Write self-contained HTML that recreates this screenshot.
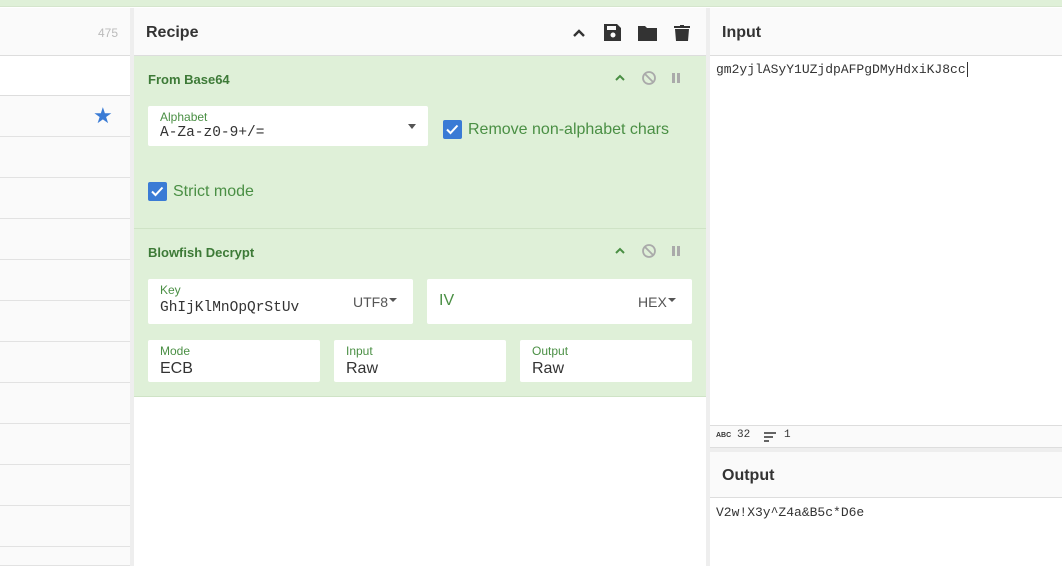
<!DOCTYPE html>
<html><head><style>
*{box-sizing:border-box;margin:0;padding:0}
html,body{width:1062px;height:566px;overflow:hidden}
body{font-family:"Liberation Sans",sans-serif;background:#fff;position:relative}
.abs{position:absolute}
.mono{font-family:"Liberation Mono",monospace}
.hdr{font-weight:bold;font-size:16px;color:#333}
.op{background:#dff0d8;border-bottom:1px solid #cfe3c6}
.optitle{font-weight:bold;font-size:13px;color:#3d7a37}
.field{background:#fff;border-radius:2px}
.lbl{font-size:12px;color:#4a8f44}
.val{font-size:16px;color:#333}
.cb{width:19px;height:19px;background:#3a7bd5;border-radius:2px}
.cbt{font-size:16px;color:#4a8f44}
.row{left:0;width:130px;height:41px;border-bottom:1px solid #e2e2e2;background:#fafafa}
</style></head><body>
<div class="abs" style="left:0;top:0;width:1062px;height:7px;background:#dff0d8;border-bottom:1px solid #d5e5cd"></div>
<div class="abs" style="left:0;top:8px;width:130px;height:48px;background:#fafafa;border-bottom:1px solid #ddd"></div>
<div class="abs" style="left:98px;top:26px;font-size:12px;color:#bbb">475</div>
<div class="abs" style="left:0;top:56px;width:130px;height:40px;background:#fff;border-bottom:1px solid #ddd"></div>
<div class="abs row" style="top:96px"></div>
<div class="abs" style="left:93px;top:103px;color:#3a7bd5;font-size:22px">★</div>
<div class="abs row" style="top:137px"></div>
<div class="abs row" style="top:178px"></div>
<div class="abs row" style="top:219px"></div>
<div class="abs row" style="top:260px"></div>
<div class="abs row" style="top:301px"></div>
<div class="abs row" style="top:342px"></div>
<div class="abs row" style="top:383px"></div>
<div class="abs row" style="top:424px"></div>
<div class="abs row" style="top:465px"></div>
<div class="abs row" style="top:506px"></div>
<div class="abs row" style="top:547px;height:19px"></div>
<div class="abs" style="left:130px;top:8px;width:4px;height:558px;background:#eee"></div>
<div class="abs" style="left:134px;top:8px;width:572px;height:48px;background:#fafafa;border-bottom:1px solid #ddd"></div>
<div class="abs hdr" style="left:146px;top:24px">Recipe</div>
<svg class="abs" style="left:570px;top:22px" width="124" height="22" viewBox="0 0 124 22">
<path d="M4 14l5-5 5 5" fill="none" stroke="#333" stroke-width="2.4"/>
<path d="M34 2h13l4 4v13h-17z" fill="#333"/><rect x="37" y="4" width="9" height="4" fill="#fafafa"/><circle cx="43" cy="13" r="2.5" fill="#fafafa"/>
<path d="M68 4h7l2 2h10v13h-19z" fill="#333"/>
<path d="M104 4h6v-1h4v1h6v2h-16z M105 7h14l-1 12h-12z" fill="#333"/>
</svg>
<div class="abs op" style="left:134px;top:56px;width:572px;height:173px"></div>
<div class="abs optitle" style="left:148px;top:72px">From Base64</div>
<svg class="abs" style="left:612px;top:70px" width="74" height="16"><path d="M4 10l4-4 4 4" fill="none" stroke="#4a8f44" stroke-width="2"/><circle cx="37" cy="8" r="6" fill="none" stroke="#aaa" stroke-width="1.8"/><path d="M33 4l8 8" stroke="#aaa" stroke-width="1.8"/><rect x="60" y="3" width="3" height="10" fill="#aaa"/><rect x="65" y="3" width="3" height="10" fill="#aaa"/></svg>
<div class="abs field" style="left:148px;top:106px;width:280px;height:40px"></div>
<div class="abs lbl" style="left:160px;top:110px">Alphabet</div>
<div class="abs val mono" style="left:160px;top:125px;font-size:14.5px">A-Za-z0-9+/=</div>
<div class="abs" style="left:408px;top:124px;border:4px solid transparent;border-top:5px solid #555"></div>
<div class="abs cb" style="left:443px;top:120px"></div><svg class="abs" style="left:443px;top:120px" width="19" height="19"><path d="M4 9.5l3.5 3.5 7-7.5" fill="none" stroke="#fff" stroke-width="2"/></svg>
<div class="abs cbt" style="left:468px;top:121px">Remove non-alphabet chars</div>
<div class="abs cb" style="left:148px;top:182px"></div><svg class="abs" style="left:148px;top:182px" width="19" height="19"><path d="M4 9.5l3.5 3.5 7-7.5" fill="none" stroke="#fff" stroke-width="2"/></svg>
<div class="abs cbt" style="left:173px;top:183px">Strict mode</div>
<div class="abs op" style="left:134px;top:229px;width:572px;height:168px"></div>
<div class="abs optitle" style="left:148px;top:245px">Blowfish Decrypt</div>
<svg class="abs" style="left:612px;top:243px" width="74" height="16"><path d="M4 10l4-4 4 4" fill="none" stroke="#4a8f44" stroke-width="2"/><circle cx="37" cy="8" r="6" fill="none" stroke="#aaa" stroke-width="1.8"/><path d="M33 4l8 8" stroke="#aaa" stroke-width="1.8"/><rect x="60" y="3" width="3" height="10" fill="#aaa"/><rect x="65" y="3" width="3" height="10" fill="#aaa"/></svg>
<div class="abs field" style="left:148px;top:279px;width:265px;height:45px"></div>
<div class="abs lbl" style="left:160px;top:283px">Key</div>
<div class="abs val mono" style="left:160px;top:300px;font-size:14.5px">GhIjKlMnOpQrStUv</div>
<div class="abs" style="left:353px;top:294px;font-size:14px;color:#555">UTF8</div>
<div class="abs" style="left:389px;top:298px;border:4px solid transparent;border-top:4px solid #555"></div>
<div class="abs field" style="left:427px;top:279px;width:265px;height:45px"></div>
<div class="abs" style="left:439px;top:292px;font-size:16px;color:#4a8f44">IV</div>
<div class="abs" style="left:638px;top:294px;font-size:14px;color:#555">HEX</div>
<div class="abs" style="left:668px;top:298px;border:4px solid transparent;border-top:4px solid #555"></div>
<div class="abs field" style="left:148px;top:340px;width:172px;height:42px"></div>
<div class="abs lbl" style="left:160px;top:344px">Mode</div><div class="abs val" style="left:160px;top:360px">ECB</div>
<div class="abs field" style="left:334px;top:340px;width:172px;height:42px"></div>
<div class="abs lbl" style="left:346px;top:344px">Input</div><div class="abs val" style="left:346px;top:360px">Raw</div>
<div class="abs field" style="left:520px;top:340px;width:172px;height:42px"></div>
<div class="abs lbl" style="left:532px;top:344px">Output</div><div class="abs val" style="left:532px;top:360px">Raw</div>
<div class="abs" style="left:706px;top:8px;width:4px;height:558px;background:#eee"></div>
<div class="abs" style="left:710px;top:8px;width:352px;height:48px;background:#fafafa;border-bottom:1px solid #ddd"></div>
<div class="abs hdr" style="left:722px;top:24px">Input</div>
<div class="abs mono" style="left:716px;top:62px;font-size:13px;color:#333">gm2yjlASyY1UZjdpAFPgDMyHdxiKJ8cc<span style="border-left:1px solid #333;margin-left:1px"></span></div>
<div class="abs" style="left:710px;top:425px;width:352px;height:23px;background:#fafafa;border-top:1px solid #ddd;border-bottom:1px solid #ddd"></div>
<div class="abs" style="left:716px;top:432px;font-size:7px;font-weight:bold;color:#333">ABC</div>
<div class="abs mono" style="left:737px;top:429px;font-size:11px;color:#333">32</div>
<svg class="abs" style="left:764px;top:432px" width="14" height="10"><path d="M0 1h12M0 5h9M0 9h5" stroke="#333" stroke-width="1.5"/></svg>
<div class="abs mono" style="left:784px;top:429px;font-size:11px;color:#333">1</div>
<div class="abs" style="left:710px;top:448px;width:352px;height:4px;background:#eee"></div>
<div class="abs" style="left:710px;top:452px;width:352px;height:46px;background:#fafafa;border-bottom:1px solid #ddd"></div>
<div class="abs hdr" style="left:722px;top:467px">Output</div>
<div class="abs mono" style="left:716px;top:505px;font-size:13px;color:#333">V2w!X3y^Z4a&amp;B5c*D6e</div>
</body></html>
